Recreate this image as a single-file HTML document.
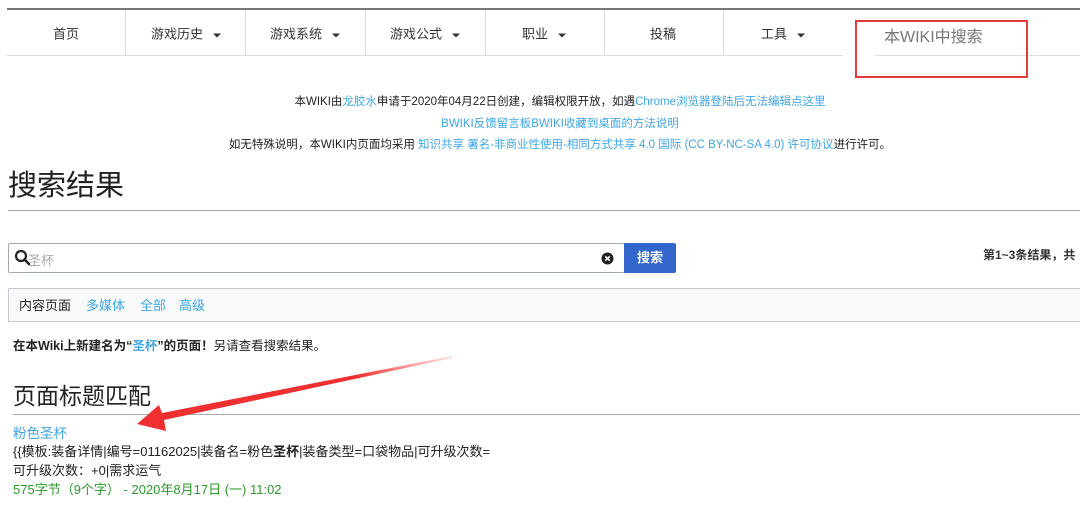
<!DOCTYPE html>
<html><head><meta charset="utf-8"><style>
*{margin:0;padding:0;box-sizing:border-box}
body{width:1080px;height:514px;overflow:hidden;background:#fff;font-family:"Liberation Sans","Noto Sans CJK SC",sans-serif;color:#222;position:relative}
.a{position:absolute;white-space:nowrap}
.blue{color:#3ea6e6}
.nav{position:absolute;top:33px;font-size:13px;color:#333;transform:translateY(-50%)}
.div{position:absolute;top:10px;width:1px;height:46px;background:#ddd}
.tri{display:inline-block;width:0;height:0;border-left:4px solid transparent;border-right:4px solid transparent;border-top:4px solid #333;margin-left:10px;vertical-align:middle}
</style></head><body>
<div class="a" style="left:7px;top:8px;width:1073px;height:2px;background:#777"></div>
<div class="a" style="left:7px;top:55px;width:836px;height:1px;background:#ddd"></div>
<div class="a" style="left:875px;top:55px;width:205px;height:1px;background:#ddd"></div>
<div class="div" style="left:125px"></div><div class="div" style="left:245px"></div><div class="div" style="left:365px"></div><div class="div" style="left:485px"></div><div class="div" style="left:604px"></div><div class="div" style="left:723px"></div>
<div class="nav" style="left:53px">首页</div>
<div class="nav" style="left:151px">游戏历史<span class="tri"></span></div>
<div class="nav" style="left:270px">游戏系统<span class="tri"></span></div>
<div class="nav" style="left:390px">游戏公式<span class="tri"></span></div>
<div class="nav" style="left:522px">职业<span class="tri"></span></div>
<div class="nav" style="left:650px">投稿</div>
<div class="nav" style="left:761px">工具<span class="tri"></span></div>
<div class="a" style="left:884px;top:23px;font-size:16px;color:#777">本WIKI中搜索</div>
<div class="a" style="left:855px;top:20px;width:173px;height:58px;border:2px solid #e53a3a"></div>

<div class="a" style="left:0;width:1080px;text-align:center;top:92px;font-size:11.5px;line-height:21.5px;color:#222;padding-left:40px">
本WIKI由<span class="blue">龙胶水</span>申请于2020年04月22日创建，编辑权限开放，如遇<span class="blue">Chrome浏览器登陆后无法编辑点这里</span><br>
<span class="blue">BWIKI反馈留言板BWIKI收藏到桌面的方法说明</span><br>
如无特殊说明，本WIKI内页面均采用 <span class="blue">知识共享 署名-非商业性使用-相同方式共享 4.0 国际 (CC BY-NC-SA 4.0) 许可协议</span>进行许可。</div>

<div class="a" style="left:8px;top:162px;font-size:29px;color:#222">搜索结果</div>
<div class="a" style="left:8px;top:210px;width:1072px;height:1px;background:#aaa"></div>

<div class="a" style="left:8px;top:243px;width:617px;height:30px;border:1px solid #a2a9b1;border-radius:2px"></div>
<svg class="a" style="left:14px;top:249px" width="18" height="18" viewBox="0 0 18 18"><circle cx="7" cy="7" r="5" fill="none" stroke="#222" stroke-width="2.2"/><path d="M10.5 10.5L15 15" stroke="#222" stroke-width="2.6" stroke-linecap="round"/></svg>
<div class="a" style="left:28px;top:250px;font-size:13px;color:#aaa">圣杯</div>
<svg class="a" style="left:601px;top:252px" width="13" height="13" viewBox="0 0 13 13"><circle cx="6.5" cy="6.5" r="6" fill="#222"/><path d="M4.3 4.3L8.7 8.7M8.7 4.3L4.3 8.7" stroke="#fff" stroke-width="1.6"/></svg>
<div class="a" style="left:624px;top:243px;width:52px;height:30px;background:#36c;border-radius:0 2px 2px 0;color:#fff;font-size:13px;font-weight:bold;text-align:center;line-height:30px">搜索</div>
<div class="a" style="left:983px;top:246px;font-size:12px;color:#333;font-weight:bold">第1~3条结果，共</div>

<div class="a" style="left:8px;top:288px;width:1072px;height:34px;background:#f8f9fa;border:1px solid #c8ccd1;border-right:none"></div>
<div class="a" style="left:19px;top:295px;font-size:13px;color:#222">内容页面</div>
<div class="a blue" style="left:86px;top:295px;font-size:13px">多媒体</div>
<div class="a blue" style="left:140px;top:295px;font-size:13px">全部</div>
<div class="a blue" style="left:179px;top:295px;font-size:13px">高级</div>

<div class="a" style="left:13px;top:335px;font-size:12.5px;color:#222"><b>在本Wiki上新建名为“<span class="blue">圣杯</span>”的页面！</b>另请查看搜索结果。</div>

<div class="a" style="left:13px;top:377px;font-size:23px;color:#222">页面标题匹配</div>
<div class="a" style="left:13px;top:414px;width:1067px;height:1px;background:#aaa"></div>
<div class="a" style="left:13px;top:422px;font-size:13.5px" ><span class="blue">粉色圣杯</span></div>
<div class="a" style="left:13px;top:442px;font-size:13px;line-height:19px;color:#222">{{模板:装备详情|编号=01162025|装备名=粉色<b>圣杯</b>|装备类型=口袋物品|可升级次数=<br>可升级次数：+0|需求运气<br><span style="color:#2a9a2a">575字节（9个字） - 2020年8月17日 (一) 11:02</span></div>

<svg class="a" style="left:0;top:0" width="1080" height="514"><defs><linearGradient id="g" x1="450" y1="357" x2="140" y2="425" gradientUnits="userSpaceOnUse"><stop offset="0" stop-color="#f55" stop-opacity="0.2"/><stop offset="0.3" stop-color="#f03030"/><stop offset="1" stop-color="#f03030"/></linearGradient></defs>
<polygon points="452,356 162,413 159,405 137,424 166,431 164,420 452,358" fill="url(#g)"/></svg>
</body></html>
